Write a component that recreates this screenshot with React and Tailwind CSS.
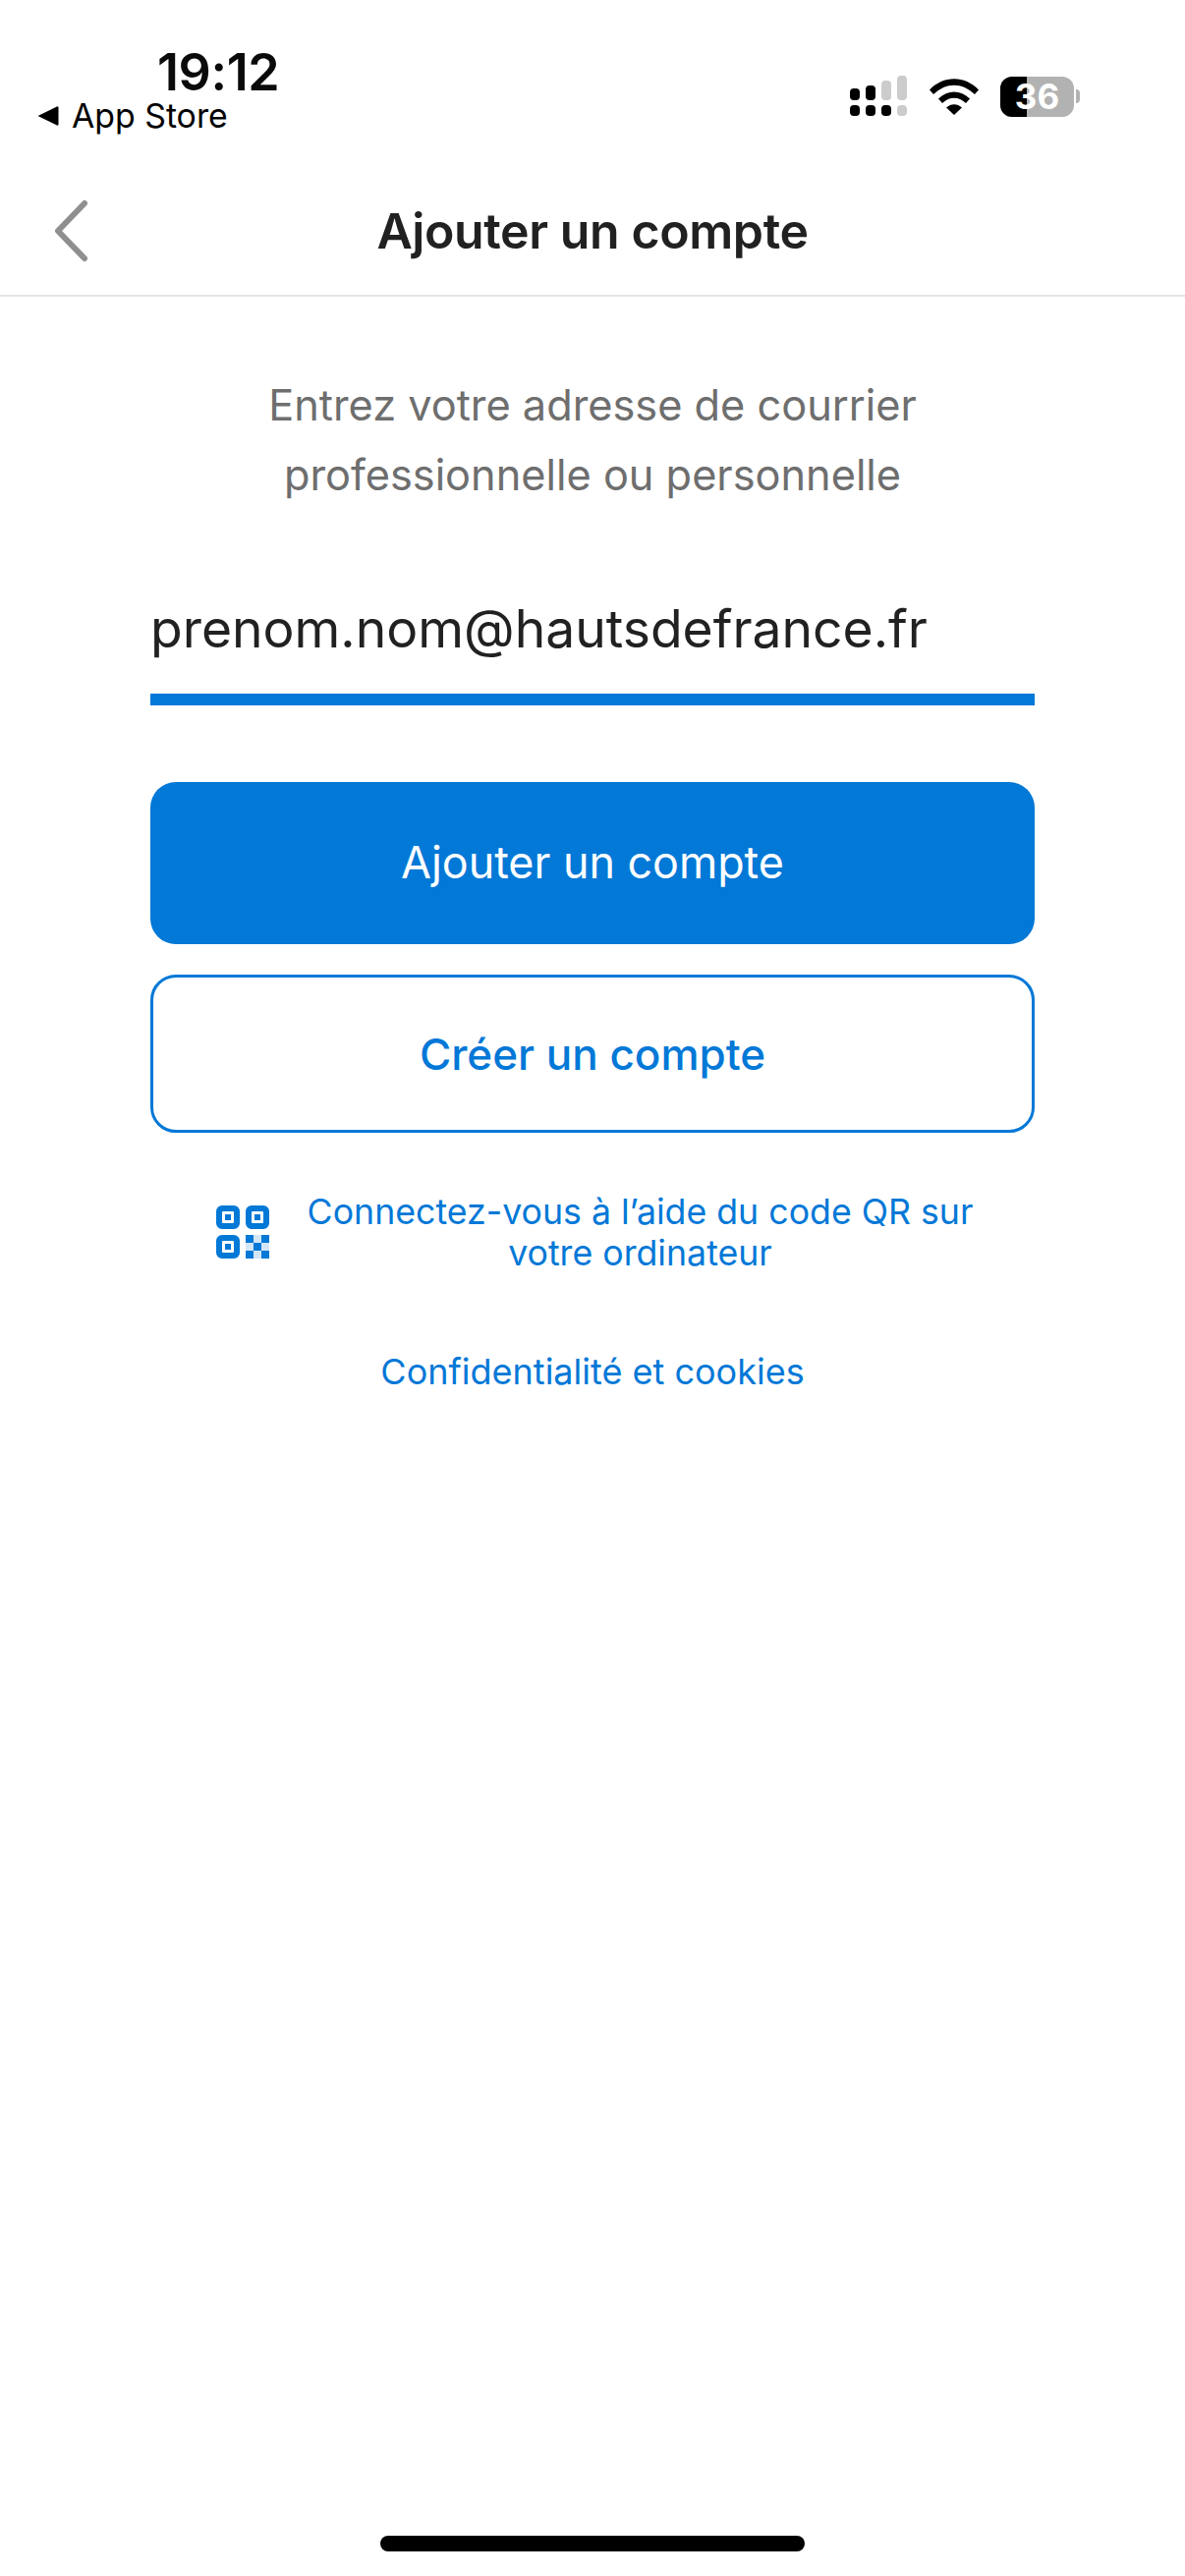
const QrIcon = () => (
  <svg width="54" height="54" viewBox="0 0 54 54" className="shrink-0">
    <path fillRule="evenodd" fill="#0278d7" d="M6 0h12a6 6 0 0 1 6 6v12a6 6 0 0 1-6 6H6a6 6 0 0 1-6-6V6a6 6 0 0 1 6-6zm1 6a1 1 0 0 0-1 1v10a1 1 0 0 0 1 1h10a1 1 0 0 0 1-1V7a1 1 0 0 0-1-1zm2 3h6v6H9z" />
    <path fillRule="evenodd" fill="#0278d7" d="M36 0h12a6 6 0 0 1 6 6v12a6 6 0 0 1-6 6H36a6 6 0 0 1-6-6V6a6 6 0 0 1 6-6zm1 6a1 1 0 0 0-1 1v10a1 1 0 0 0 1 1h10a1 1 0 0 0 1-1V7a1 1 0 0 0-1-1zm2 3h6v6h-6z" />
    <path fillRule="evenodd" fill="#0278d7" d="M6 30h12a6 6 0 0 1 6 6v12a6 6 0 0 1-6 6H6a6 6 0 0 1-6-6V36a6 6 0 0 1 6-6zm1 6a1 1 0 0 0-1 1v10a1 1 0 0 0 1 1h10a1 1 0 0 0 1-1V37a1 1 0 0 0-1-1zm2 3h6v6H9z" />
    <path fill="#0278d7" d="M30 30h8v8h-8zM46 30h8v8h-8zM38 38h8v8h-8zM30 46h8v8h-8zM46 46h8v8h-8z" />
    <path fill="#d3e6f7" d="M38 30h8v8h-8zM30 38h8v8h-8zM46 38h8v8h-8zM38 46h8v8h-8z" />
  </svg>
);

const SignalIcon = () => (
  <svg width="58" height="42" viewBox="0 0 58 42">
    <rect x="0" y="13" width="10" height="12" rx="4" fill="#000" />
    <rect x="16" y="10" width="10" height="15" rx="4" fill="#000" />
    <rect x="32" y="5" width="10" height="20" rx="4" fill="#ccc" />
    <rect x="48" y="0" width="10" height="25" rx="4" fill="#ccc" />
    <rect x="0" y="30" width="10" height="11" rx="4" fill="#000" />
    <rect x="16" y="30" width="10" height="11" rx="4" fill="#000" />
    <rect x="32" y="30" width="10" height="11" rx="4" fill="#000" />
    <rect x="48" y="30" width="10" height="11" rx="4" fill="#ccc" />
  </svg>
);

const WifiIcon = () => (
  <svg width="50" height="37" viewBox="0 0 50 37">
    <path d="M0 11.500C14-3.500 36-3.500 50 11.500l-4 4.500C33 3.500 17 3.500 4 16z" fill="#000" />
    <path d="M9 20.500c9.500-9.500 22.500-9.500 32 0l-4 4.500c-7.500-7-16.500-7-24 0z" fill="#000" />
    <path d="M17 29.500c5-4.500 11-4.500 16 0L25 37z" fill="#000" />
  </svg>
);

const Battery = () => (
  <div className="flex items-center">
    <div className="relative flex h-[41px] w-[75px] items-center justify-center overflow-hidden rounded-[12px] bg-[#b2b2b2]">
      <div className="absolute inset-y-0 left-0 w-[27px] bg-black" />
      <span className="relative text-[35px] leading-none font-bold text-white">36</span>
    </div>
    <div className="ml-[2px] h-[14px] w-[4px] rounded-r-full bg-[#b2b2b2]" />
  </div>
);

export default function App() {
  return (
    <div className="flex min-h-[2622px] w-[1206px] flex-col bg-white font-['Inter','Liberation_Sans',sans-serif]">
      <div className="flex h-[172px] justify-between pl-[38px] pr-[107px]">
        <div className="flex flex-col">
          <span className="mt-[44px] ml-[122px] text-[52px] leading-[60px] font-semibold tracking-[-0.4px] text-[#0a0a0a]">19:12</span>
          <div className="mt-[-6px] flex items-center gap-[13px]">
            <svg width="22" height="22" viewBox="0 0 22 22">
              <path d="M0.500 11L20 1.500a1 1 0 0 1 1.500 1v17a1 1 0 0 1-1.500 1z" fill="#000" />
            </svg>
            <span className="text-[33.800px] leading-[40px] font-normal text-black">App Store</span>
          </div>
        </div>
        <div className="mt-[77px] flex h-[42px] items-center gap-[22.500px]">
          <SignalIcon />
          <WifiIcon />
          <Battery />
        </div>
      </div>

      <div className="relative flex h-[130px] items-center justify-center border-b-2 border-[#e3e3e3] pb-[2px]">
        <svg width="40" height="66" viewBox="0 0 40 66" className="absolute top-[30px] left-[53px]">
          <path d="M33 5L6 33l27 28" fill="none" stroke="#8f8f8f" strokeWidth="6" strokeLinecap="round" strokeLinejoin="round" />
        </svg>
        <h1 className="text-[50px] leading-[60px] font-semibold tracking-[-0.4px] text-[#212121]">Ajouter un compte</h1>
      </div>

      <div className="flex flex-col items-center px-[153px]">
        <p className="mt-[75px] text-center text-[43.300px] leading-[71px] text-[#6e6e6e]">
          Entrez votre adresse de courrier
          <br />
          professionnelle ou personnelle
        </p>
        <div className="mt-[87px] w-full border-b-[12px] border-[#0278d7] pb-[32px] text-[53.400px] leading-[68px] text-[#212121]">prenom.nom@hautsdefrance.fr</div>
        <button className="mt-[78px] flex h-[165px] w-full items-center justify-center rounded-[26px] bg-[#0278d7] text-[44.800px] font-normal text-white">Ajouter un compte</button>
        <button className="mt-[31px] flex h-[161px] w-full items-center justify-center rounded-[26px] border-[3px] border-[#0278d7] text-[44px] font-medium text-[#0278d7]">Créer un compte</button>
        <div className="mt-[59px] flex w-full items-center justify-center gap-[39px] pl-[4px]">
          <QrIcon />
          <p className="text-center text-[35.700px] leading-[42px] text-[#0278d7]">
            Connectez-vous à l’aide du code QR sur
            <br />
            votre ordinateur
          </p>
        </div>
        <a className="mt-[79px] text-[36px] leading-[42px] text-[#0278d7]">Confidentialité et cookies</a>
      </div>

      <div className="mt-auto flex justify-center pb-[25px]">
        <div className="h-[16px] w-[432px] rounded-full bg-black" />
      </div>
    </div>
  );
}
